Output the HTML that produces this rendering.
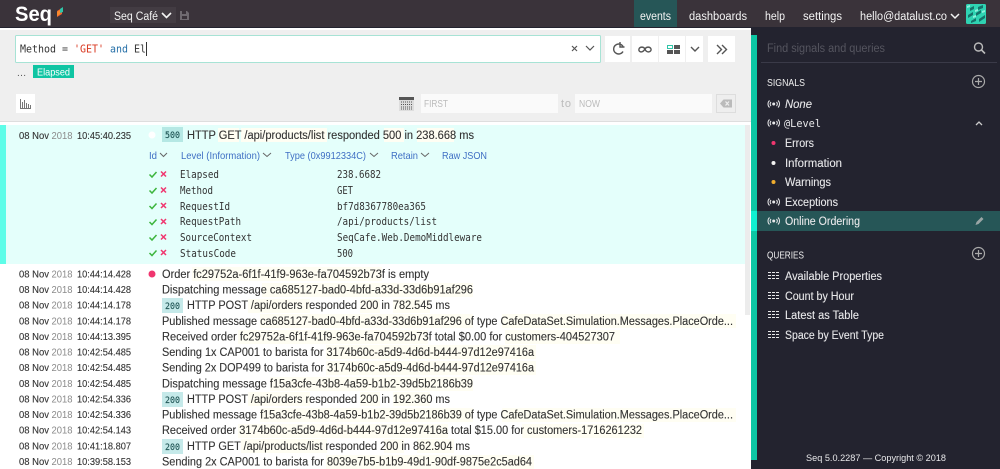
<!DOCTYPE html>
<html><head><meta charset="utf-8"><title>Seq</title>
<style>
html,body{margin:0;padding:0;width:1000px;height:469px;overflow:hidden;background:#23232f}
svg{display:block}
text{font-family:"Liberation Sans",sans-serif;font-size:11.5px;fill:#333;white-space:pre}
.m{font-family:"DejaVu Sans Mono","Liberation Mono",monospace;font-size:10.3px}
.b{font-family:"DejaVu Sans Mono","Liberation Mono",monospace;font-size:9px;fill:#1f5555;stroke:#1f5555;stroke-width:.15}
.dt{font-size:10.2px;stroke:#333;stroke-width:.12}
.y{font-size:10.2px;fill:#8a8a8a}
.r text{stroke:#333;stroke-width:.12}
.n{fill:#f4f4f4;font-size:11.5px}
.s{fill:#e8e8ea;font-size:11.5px;stroke:#e8e8ea;stroke-width:.1}
.l{fill:#3f6fc4;font-size:10.5px}
.ic{fill:none;stroke:#555;stroke-width:1.4}
.sig{fill:none;stroke:#e8e8ea;stroke-width:1}
</style></head><body>
<svg width="1000" height="469" viewBox="0 0 1000 469" xmlns="http://www.w3.org/2000/svg">
<rect width="1000" height="469" fill="#23232f"/>
<!-- header -->
<rect width="1000" height="27" fill="#3a333a"/>
<text x="15" y="21" style="font-size:21px;font-weight:bold;fill:#fff" textLength="37" lengthAdjust="spacingAndGlyphs">Seq</text>
<polygon points="57,11 62,8 62,14 57,17" fill="#f0642d"/><polygon points="57,12 60,10 60,14 57,16" fill="#f78a2d"/><polygon points="60,9 63,7 63,12 60,13" fill="#2fc5a8"/>
<rect x="110" y="7" width="66" height="16" fill="#433c43"/>
<text x="114" y="20" class="n" textLength="44" lengthAdjust="spacingAndGlyphs">Seq Café</text>
<path d="M162 13l4.500 4.500 4.500-4.500" fill="none" stroke="#f4f4f4" stroke-width="1.600"/>
<path d="M180 11h7l2 2v7h-9z" fill="#6f6a70"/><rect x="182" y="11" width="4" height="3" fill="#3a333a"/><rect x="182" y="16" width="5" height="3" fill="#3a333a"/>
<rect x="634" y="0" width="43" height="27" fill="#265657"/>
<text x="640" y="20" class="n" textLength="31" lengthAdjust="spacingAndGlyphs">events</text>
<text x="689" y="20" class="n" textLength="58" lengthAdjust="spacingAndGlyphs">dashboards</text>
<text x="765" y="20" class="n" textLength="20" lengthAdjust="spacingAndGlyphs">help</text>
<text x="803" y="20" class="n" textLength="39" lengthAdjust="spacingAndGlyphs">settings</text>
<text x="860" y="20" class="n" textLength="87" lengthAdjust="spacingAndGlyphs">hello@datalust.co</text>
<path d="M951 14l4 4 4-4" fill="none" stroke="#f4f4f4" stroke-width="1.500"/>
<rect x="966" y="4" width="20" height="20" rx="1.500" fill="#2fd3b2"/>
<g fill="#15736a"><polygon points="970,8 974,6 974,9 970,11"/><polygon points="978,7 983,5 983,8 978,10"/><polygon points="968,15 973,12 973,15 968,18"/><polygon points="976,13 981,10 981,13 976,16"/><polygon points="971,21 976,18 976,21 971,23"/><polygon points="979,19 985,15 985,18 979,22"/></g>
<g fill="#8ff0dc"><polygon points="967,6 970,5 970,7 967,8"/><polygon points="975,10 978,9 978,11 975,12"/><polygon points="982,11 985,10 985,12 982,13"/><polygon points="973,16 976,15 976,17 973,18"/></g>
<!-- main panel -->
<rect x="0" y="28" width="751" height="441" fill="#fff"/>
<rect x="0" y="30" width="751" height="91" fill="#efefef"/>
<rect x="0" y="121" width="751" height="1" fill="#dedede"/>
<!-- search -->
<rect x="15.500" y="35.500" width="585" height="27" rx="1" fill="#fff" stroke="#a7e3d5"/>
<text x="20" y="52.500" class="m" style="font-size:11px" textLength="126" lengthAdjust="spacingAndGlyphs"><tspan fill="#333">Method = </tspan><tspan fill="#d9361e">'GET'</tspan><tspan fill="#333"> </tspan><tspan fill="#2670a8">and</tspan><tspan fill="#333"> El</tspan></text>
<rect x="146" y="42" width="1" height="14" fill="#333"/>
<path d="M572 46l5 5M577 46l-5 5" stroke="#555" stroke-width="1.200" fill="none"/>
<path d="M586 46l4 4 4-4" stroke="#555" stroke-width="1.200" fill="none"/>
<g fill="#fff"><rect x="605" y="36" width="25" height="26"/><rect x="632" y="36" width="26" height="26"/><rect x="659" y="36" width="26" height="26"/><rect x="686" y="36" width="17" height="26"/><rect x="708" y="36" width="27" height="26"/></g>
<path d="M623 46.500a5 5 0 1 0 0 5" class="ic"/><path d="M620 42v5h4.500" class="ic"/>
<path d="M645 49c-1.500-2.500-5-2.500-6 0s3 5 6 0c1.500-2.500 5-2.500 6 0s-4.500 5-6 0z" class="ic"/>
<rect x="667.500" y="45.500" width="5" height="3" fill="none" stroke="#2fc5a8"/><rect x="674" y="45" width="6" height="4" fill="#555"/><rect x="667" y="50" width="6" height="4" fill="#555"/><rect x="674" y="50" width="6" height="4" fill="#555"/>
<path d="M691 47l4 4 4-4" class="ic"/>
<path d="M717 45l4.500 4.500-4.500 4.500M722 45l4.500 4.500-4.500 4.500" class="ic"/>
<text x="17" y="76" style="font-size:10px;fill:#555" textLength="9">...</text>
<rect x="33" y="65" width="41" height="13" fill="#0fc5a3"/>
<text x="37" y="75.500" style="font-size:10.500px;fill:#fff" textLength="33" lengthAdjust="spacingAndGlyphs">Elapsed</text>
<!-- filter bar -->
<rect x="16" y="94" width="19" height="19" fill="#fff"/>
<path d="M20.500 99v9M22.500 102v6M24.500 100v8M26.500 103v5M28.500 104v4M30.500 105v3M20 108.500h11" stroke="#777" stroke-width="1" fill="none"/>
<rect x="399" y="97" width="15" height="14" fill="#ddd"/><rect x="399" y="97" width="15" height="3" fill="#555"/>
<path d="M401 102h11M401 104.500h11M401 107h11M401 109h11" stroke="#555" stroke-width="1" stroke-dasharray="1 1"/>
<rect x="421" y="94" width="137" height="19" fill="#fafafa"/>
<text x="424" y="107" style="font-size:10px;fill:#bbb" textLength="24" lengthAdjust="spacingAndGlyphs">FIRST</text>
<text x="561" y="107" style="font-size:11px;fill:#bbb" textLength="10">to</text>
<rect x="575" y="94" width="137" height="19" fill="#fafafa"/>
<text x="579" y="107" style="font-size:10px;fill:#bbb" textLength="21" lengthAdjust="spacingAndGlyphs">NOW</text>
<rect x="716.500" y="94.500" width="19" height="18" fill="#eee" stroke="#ddd"/>
<path d="M720 103.500l3.500-4h8.500v8h-8.500z" fill="#bbb"/><path d="M725.500 101.500l3.500 4M729 101.500l-3.500 4" stroke="#eee" stroke-width="1.200"/>
<!-- selected event -->
<rect x="0" y="125" width="745" height="139" fill="#e4fffb"/>
<rect x="0" y="125" width="6" height="139" fill="#5dfde8"/>
<rect x="745" y="125" width="5" height="190" fill="#ececec"/>
<text x="19" y="139" class="dt" textLength="30" lengthAdjust="spacingAndGlyphs">08 Nov</text><text x="51.500" y="139" class="y" textLength="21" lengthAdjust="spacingAndGlyphs">2018</text><text x="77" y="139" class="dt" textLength="54" lengthAdjust="spacingAndGlyphs">10:45:40.235</text>
<circle cx="152" cy="135" r="3.500" fill="#fff"/>
<rect x="162" y="127" width="21" height="15" fill="#b5e8e4"/>
<text x="165" y="138" class="b" textLength="15" lengthAdjust="spacingAndGlyphs">500</text>
<rect x="218" y="128" width="21" height="14" fill="#fffef3"/><rect x="241" y="128" width="86" height="14" fill="#fffef3"/><rect x="384" y="128" width="20" height="14" fill="#fffef3"/><rect x="417" y="128" width="37" height="14" fill="#fffef3"/>
<g class="r"><text x="187" y="139" textLength="287" lengthAdjust="spacingAndGlyphs">HTTP GET /api/products/list responded 500 in 238.668 ms</text></g>
<g fill="none" stroke="#666" stroke-width="1"><path d="M160 153l3.500 3.500 3.500-3.500"/><path d="M263 153l4 3.500 4-3.500"/><path d="M370 153l4 3.500 4-3.500"/><path d="M421 153l4 3.500 4-3.500"/></g>
<text x="149" y="159" class="l" textLength="8" lengthAdjust="spacingAndGlyphs">Id</text>
<text x="181" y="159" class="l" textLength="79" lengthAdjust="spacingAndGlyphs">Level (Information)</text>
<text x="285" y="159" class="l" textLength="81" lengthAdjust="spacingAndGlyphs">Type (0x9912334C)</text>
<text x="391" y="159" class="l" textLength="27" lengthAdjust="spacingAndGlyphs">Retain</text>
<text x="442" y="159" class="l" textLength="45" lengthAdjust="spacingAndGlyphs">Raw JSON</text>
<g fill="none" stroke-width="1.500">
<g stroke="#3db53d"><path d="M149.500 174.500l2.500 2.500 4.500-5"/><path d="M149.500 190.500l2.500 2.500 4.500-5"/><path d="M149.500 206l2.500 2.500 4.500-5"/><path d="M149.500 222l2.500 2.500 4.500-5"/><path d="M149.500 237.500l2.500 2.500 4.500-5"/><path d="M149.500 253l2.500 2.500 4.500-5"/></g>
<g stroke="#f0366f"><path d="M161 171.500l5 5M166 171.500l-5 5"/><path d="M161 187.500l5 5M166 187.500l-5 5"/><path d="M161 203l5 5M166 203l-5 5"/><path d="M161 219l5 5M166 219l-5 5"/><path d="M161 234.500l5 5M166 234.500l-5 5"/><path d="M161 250l5 5M166 250l-5 5"/></g>
</g>
<g>
<text x="180" y="178" class="m" textLength="39" lengthAdjust="spacingAndGlyphs">Elapsed</text><text x="337" y="178" class="m" textLength="44" lengthAdjust="spacingAndGlyphs">238.6682</text>
<text x="180" y="194" class="m" textLength="33" lengthAdjust="spacingAndGlyphs">Method</text><text x="337" y="194" class="m" textLength="16" lengthAdjust="spacingAndGlyphs">GET</text>
<text x="180" y="210" class="m" textLength="50" lengthAdjust="spacingAndGlyphs">RequestId</text><text x="337" y="210" class="m" textLength="89" lengthAdjust="spacingAndGlyphs">bf7d8367780ea365</text>
<text x="180" y="225" class="m" textLength="61" lengthAdjust="spacingAndGlyphs">RequestPath</text><text x="337" y="225" class="m" textLength="100" lengthAdjust="spacingAndGlyphs">/api/products/list</text>
<text x="180" y="241" class="m" textLength="72" lengthAdjust="spacingAndGlyphs">SourceContext</text><text x="337" y="241" class="m" textLength="145" lengthAdjust="spacingAndGlyphs">SeqCafe.Web.DemoMiddleware</text>
<text x="180" y="257" class="m" textLength="56" lengthAdjust="spacingAndGlyphs">StatusCode</text><text x="337" y="257" class="m" textLength="16" lengthAdjust="spacingAndGlyphs">500</text>
</g>
<!-- property highlights -->
<g fill="#fffef3">
<rect x="192" y="267" width="190" height="14"/><rect x="262" y="283" width="211" height="14"/><rect x="248" y="299" width="62" height="14"/><rect x="360" y="299" width="20" height="14"/><rect x="393" y="299" width="37" height="14"/>
<rect x="260" y="314" width="213" height="14"/><rect x="502" y="314" width="234" height="14"/>
<rect x="238" y="330" width="190" height="14"/><rect x="505" y="330" width="115" height="14"/>
<rect x="326" y="345" width="210" height="14"/><rect x="326" y="361" width="210" height="14"/>
<rect x="270" y="377" width="203" height="14"/><rect x="248" y="392" width="62" height="14"/><rect x="360" y="392" width="20" height="14"/><rect x="393" y="392" width="37" height="14"/>
<rect x="260" y="408" width="213" height="14"/><rect x="502" y="408" width="234" height="14"/>
<rect x="238" y="424" width="210" height="14"/><rect x="522" y="424" width="122" height="14"/>
<rect x="241" y="439" width="86" height="14"/><rect x="384" y="439" width="20" height="14"/><rect x="417" y="439" width="37" height="14"/>
<rect x="326" y="455" width="208" height="14"/>
</g>
<!-- rows -->
<g>
<text x="19" y="277.500" class="dt" textLength="30" lengthAdjust="spacingAndGlyphs">08 Nov</text><text x="51.500" y="277.500" class="y" textLength="21" lengthAdjust="spacingAndGlyphs">2018</text><text x="77" y="277.500" class="dt" textLength="54" lengthAdjust="spacingAndGlyphs">10:44:14.428</text>
<text x="19" y="293" class="dt" textLength="30" lengthAdjust="spacingAndGlyphs">08 Nov</text><text x="51.500" y="293" class="y" textLength="21" lengthAdjust="spacingAndGlyphs">2018</text><text x="77" y="293" class="dt" textLength="54" lengthAdjust="spacingAndGlyphs">10:44:14.428</text>
<text x="19" y="308.500" class="dt" textLength="30" lengthAdjust="spacingAndGlyphs">08 Nov</text><text x="51.500" y="308.500" class="y" textLength="21" lengthAdjust="spacingAndGlyphs">2018</text><text x="77" y="308.500" class="dt" textLength="54" lengthAdjust="spacingAndGlyphs">10:44:14.178</text>
<text x="19" y="324.500" class="dt" textLength="30" lengthAdjust="spacingAndGlyphs">08 Nov</text><text x="51.500" y="324.500" class="y" textLength="21" lengthAdjust="spacingAndGlyphs">2018</text><text x="77" y="324.500" class="dt" textLength="54" lengthAdjust="spacingAndGlyphs">10:44:14.178</text>
<text x="19" y="340" class="dt" textLength="30" lengthAdjust="spacingAndGlyphs">08 Nov</text><text x="51.500" y="340" class="y" textLength="21" lengthAdjust="spacingAndGlyphs">2018</text><text x="77" y="340" class="dt" textLength="54" lengthAdjust="spacingAndGlyphs">10:44:13.395</text>
<text x="19" y="355.500" class="dt" textLength="30" lengthAdjust="spacingAndGlyphs">08 Nov</text><text x="51.500" y="355.500" class="y" textLength="21" lengthAdjust="spacingAndGlyphs">2018</text><text x="77" y="355.500" class="dt" textLength="54" lengthAdjust="spacingAndGlyphs">10:42:54.485</text>
<text x="19" y="371" class="dt" textLength="30" lengthAdjust="spacingAndGlyphs">08 Nov</text><text x="51.500" y="371" class="y" textLength="21" lengthAdjust="spacingAndGlyphs">2018</text><text x="77" y="371" class="dt" textLength="54" lengthAdjust="spacingAndGlyphs">10:42:54.485</text>
<text x="19" y="387" class="dt" textLength="30" lengthAdjust="spacingAndGlyphs">08 Nov</text><text x="51.500" y="387" class="y" textLength="21" lengthAdjust="spacingAndGlyphs">2018</text><text x="77" y="387" class="dt" textLength="54" lengthAdjust="spacingAndGlyphs">10:42:54.485</text>
<text x="19" y="402.500" class="dt" textLength="30" lengthAdjust="spacingAndGlyphs">08 Nov</text><text x="51.500" y="402.500" class="y" textLength="21" lengthAdjust="spacingAndGlyphs">2018</text><text x="77" y="402.500" class="dt" textLength="54" lengthAdjust="spacingAndGlyphs">10:42:54.336</text>
<text x="19" y="418" class="dt" textLength="30" lengthAdjust="spacingAndGlyphs">08 Nov</text><text x="51.500" y="418" class="y" textLength="21" lengthAdjust="spacingAndGlyphs">2018</text><text x="77" y="418" class="dt" textLength="54" lengthAdjust="spacingAndGlyphs">10:42:54.336</text>
<text x="19" y="433.500" class="dt" textLength="30" lengthAdjust="spacingAndGlyphs">08 Nov</text><text x="51.500" y="433.500" class="y" textLength="21" lengthAdjust="spacingAndGlyphs">2018</text><text x="77" y="433.500" class="dt" textLength="54" lengthAdjust="spacingAndGlyphs">10:42:54.143</text>
<text x="19" y="449.500" class="dt" textLength="30" lengthAdjust="spacingAndGlyphs">08 Nov</text><text x="51.500" y="449.500" class="y" textLength="21" lengthAdjust="spacingAndGlyphs">2018</text><text x="77" y="449.500" class="dt" textLength="54" lengthAdjust="spacingAndGlyphs">10:41:18.807</text>
<text x="19" y="465" class="dt" textLength="30" lengthAdjust="spacingAndGlyphs">08 Nov</text><text x="51.500" y="465" class="y" textLength="21" lengthAdjust="spacingAndGlyphs">2018</text><text x="77" y="465" class="dt" textLength="54" lengthAdjust="spacingAndGlyphs">10:39:58.153</text>
</g>
<circle cx="152" cy="274" r="3.500" fill="#f0366f"/>
<g fill="#c5e9e9"><rect x="162" y="298" width="21" height="15"/><rect x="162" y="392" width="21" height="15"/><rect x="162" y="439" width="21" height="15"/></g>
<text x="165" y="309" class="b" textLength="15" lengthAdjust="spacingAndGlyphs">200</text>
<text x="165" y="403" class="b" textLength="15" lengthAdjust="spacingAndGlyphs">200</text>
<text x="165" y="450" class="b" textLength="15" lengthAdjust="spacingAndGlyphs">200</text>
<g class="r">
<text x="162" y="278" textLength="267" lengthAdjust="spacingAndGlyphs">Order fc29752a-6f1f-41f9-963e-fa704592b73f is empty</text>
<text x="162" y="293.500" textLength="311" lengthAdjust="spacingAndGlyphs">Dispatching message ca685127-bad0-4bfd-a33d-33d6b91af296</text>
<text x="187" y="309" textLength="263" lengthAdjust="spacingAndGlyphs">HTTP POST /api/orders responded 200 in 782.545 ms</text>
<text x="162" y="325" textLength="571" lengthAdjust="spacingAndGlyphs">Published message ca685127-bad0-4bfd-a33d-33d6b91af296 of type CafeDataSet.Simulation.Messages.PlaceOrde...</text>
<text x="162" y="340.500" textLength="453" lengthAdjust="spacingAndGlyphs">Received order fc29752a-6f1f-41f9-963e-fa704592b73f total $0.00 for customers-404527307</text>
<text x="162" y="356" textLength="372" lengthAdjust="spacingAndGlyphs">Sending 1x CAP001 to barista for 3174b60c-a5d9-4d6d-b444-97d12e97416a</text>
<text x="162" y="371.500" textLength="372" lengthAdjust="spacingAndGlyphs">Sending 2x DOP499 to barista for 3174b60c-a5d9-4d6d-b444-97d12e97416a</text>
<text x="162" y="387.500" textLength="311" lengthAdjust="spacingAndGlyphs">Dispatching message f15a3cfe-43b8-4a59-b1b2-39d5b2186b39</text>
<text x="187" y="403" textLength="263" lengthAdjust="spacingAndGlyphs">HTTP POST /api/orders responded 200 in 192.360 ms</text>
<text x="162" y="418.500" textLength="571" lengthAdjust="spacingAndGlyphs">Published message f15a3cfe-43b8-4a59-b1b2-39d5b2186b39 of type CafeDataSet.Simulation.Messages.PlaceOrde...</text>
<text x="162" y="434" textLength="480" lengthAdjust="spacingAndGlyphs">Received order 3174b60c-a5d9-4d6d-b444-97d12e97416a total $15.00 for customers-1716261232</text>
<text x="187" y="450" textLength="283" lengthAdjust="spacingAndGlyphs">HTTP GET /api/products/list responded 200 in 862.904 ms</text>
<text x="162" y="465.500" textLength="370" lengthAdjust="spacingAndGlyphs">Sending 2x CAP001 to barista for 8039e7b5-b1b9-49d1-90df-9875e2c5ad64</text>
</g>
<!-- sidebar -->
<rect x="751" y="27" width="249" height="442" fill="#23232f"/>
<rect x="751" y="35" width="6" height="425" fill="#0cc7a4"/>
<rect x="751" y="211" width="6" height="20" fill="#0ff0d2"/>
<rect x="757" y="211" width="243" height="20" fill="#265657"/>
<text x="767" y="52" style="font-size:11.500px;fill:#55555f" textLength="118" lengthAdjust="spacingAndGlyphs">Find signals and queries</text>
<circle cx="978.500" cy="47" r="4" fill="none" stroke="#bbb" stroke-width="1.400"/><path d="M981.500 50l3.500 3.500" stroke="#bbb" stroke-width="1.600"/>
<rect x="761" y="62" width="236" height="1" fill="#3a3a48"/>
<text x="767" y="86" style="font-size:10px;fill:#f0f0f0" textLength="38" lengthAdjust="spacingAndGlyphs">SIGNALS</text>
<circle cx="978.500" cy="81.500" r="6" fill="none" stroke="#aaa" stroke-width="1.200"/><path d="M975 81.500h7M978.500 78v7" stroke="#aaa" stroke-width="1.200"/>
<text x="767" y="258.500" style="font-size:10px;fill:#f0f0f0" textLength="37" lengthAdjust="spacingAndGlyphs">QUERIES</text>
<circle cx="978.500" cy="253.500" r="6" fill="none" stroke="#aaa" stroke-width="1.200"/><path d="M975 253.500h7M978.500 250v7" stroke="#aaa" stroke-width="1.200"/>
<g class="sig">
<path d="M769.500 100.500c-2 2-2 5 0 7M771 102c-1 1.200-1 2.800 0 4M778 100.500c2 2 2 5 0 7M776.500 102c1 1.200 1 2.800 0 4"/>
<path d="M769.500 119.500c-2 2-2 5 0 7M771 121c-1 1.200-1 2.800 0 4M778 119.500c2 2 2 5 0 7M776.500 121c1 1.200 1 2.800 0 4"/>
<path d="M769.500 198.500c-2 2-2 5 0 7M771 200c-1 1.200-1 2.800 0 4M778 198.500c2 2 2 5 0 7M776.500 200c1 1.200 1 2.800 0 4"/>
<path d="M769.500 217.500c-2 2-2 5 0 7M771 219c-1 1.200-1 2.800 0 4M778 217.500c2 2 2 5 0 7M776.500 219c1 1.200 1 2.800 0 4"/>
</g>
<g fill="#e8e8ea"><circle cx="773.700" cy="104" r="1.500"/><circle cx="773.700" cy="123" r="1.500"/><circle cx="773.700" cy="202" r="1.500"/><circle cx="773.700" cy="221" r="1.500"/></g>
<text x="785" y="108" class="s" style="font-style:italic" textLength="27" lengthAdjust="spacingAndGlyphs">None</text>
<text x="784" y="127" class="m" style="fill:#e8e8ea;font-size:11px" textLength="37" lengthAdjust="spacingAndGlyphs">@Level</text>
<path d="M976 125l3-3 3 3" fill="none" stroke="#ccc" stroke-width="1.300"/>
<circle cx="773.500" cy="143" r="2" fill="#f0366f"/><circle cx="773.500" cy="163" r="2" fill="#f2f2f2"/><circle cx="773.500" cy="182" r="2" fill="#f0ad2e"/>
<text x="785" y="147" class="s" textLength="29" lengthAdjust="spacingAndGlyphs">Errors</text>
<text x="785" y="167" class="s" textLength="57" lengthAdjust="spacingAndGlyphs">Information</text>
<text x="785" y="186" class="s" textLength="46" lengthAdjust="spacingAndGlyphs">Warnings</text>
<text x="785" y="206" class="s" textLength="53" lengthAdjust="spacingAndGlyphs">Exceptions</text>
<text x="785" y="225" class="s" textLength="75" lengthAdjust="spacingAndGlyphs">Online Ordering</text>
<path d="M975.500 225l1-3 5-5 2 2-5 5z" fill="#9aa5a5"/>
<g stroke="#e8e8ea" stroke-width="1" stroke-dasharray="3 1">
<path d="M768 272.500h11M768 275.500h11M768 278.500h11"/>
<path d="M768 292.500h11M768 295.500h11M768 298.500h11"/>
<path d="M768 311.500h11M768 314.500h11M768 317.500h11"/>
<path d="M768 331.500h11M768 334.500h11M768 337.500h11"/>
</g>
<text x="785" y="280" class="s" textLength="97" lengthAdjust="spacingAndGlyphs">Available Properties</text>
<text x="785" y="300" class="s" textLength="69" lengthAdjust="spacingAndGlyphs">Count by Hour</text>
<text x="785" y="319" class="s" textLength="74" lengthAdjust="spacingAndGlyphs">Latest as Table</text>
<text x="785" y="339" class="s" textLength="99" lengthAdjust="spacingAndGlyphs">Space by Event Type</text>
<text x="806" y="461" style="font-size:9.500px;fill:#e8e8ea" textLength="140" lengthAdjust="spacingAndGlyphs">Seq 5.0.2287 — Copyright © 2018</text>
</svg>
</body></html>
